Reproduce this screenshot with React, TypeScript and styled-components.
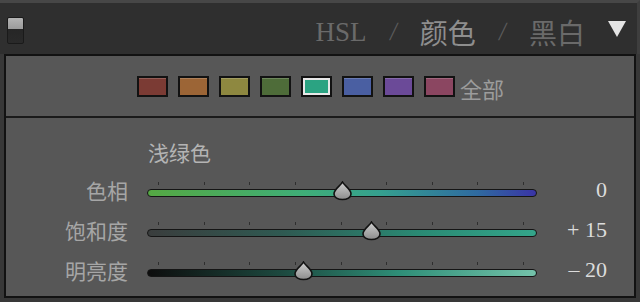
import * as React from 'react';
import styled, { createGlobalStyle } from 'styled-components';

const GlobalStyle = createGlobalStyle`
    html, body {
        margin: 0;
        padding: 0;
        background-color: #383838;
    }
    * {
        box-sizing: border-box;
    }
`

const cjk = `"Noto Sans CJK SC", "Noto Sans", sans-serif`
const serif = `"Liberation Serif", "Noto Sans CJK SC", serif`

type Swatch = { color: string, active?: boolean }

const swatches: Swatch[] = [
    { color: '#7b3b34' },
    { color: '#9c6536' },
    { color: '#8e8840' },
    { color: '#4e6c39' },
    { color: '#2ba382', active: true },
    { color: '#4a5fa2' },
    { color: '#6b4a98' },
    { color: '#8b4661' },
]

type SliderData = {
    label: string
    value: number
    text: string
    track: string
}

const sliders: SliderData[] = [
    { label: '色相', value: 0, text: '0', track: 'linear-gradient(90deg, #55a843 0%, #3fae78 40%, #35a08f 60%, #2f6aa0 85%, #3a34a6 100%)' },
    { label: '饱和度', value: 15, text: '+ 15', track: 'linear-gradient(90deg, #3a3d3d 0%, #2f5a52 35%, #2a8a74 70%, #34a58a 100%)' },
    { label: '明亮度', value: -20, text: '– 20', track: 'linear-gradient(90deg, #0d0d0d 0%, #1d4a40 35%, #2f8f78 65%, #74c2aa 100%)' },
]

const Page = styled.div`
    width: 640px;
    height: 302px;
    background-color: #383838;
    display: flex;
    flex-direction: column;
    overflow: hidden;
`

const Header = styled.div`
    height: 54px;
    background-color: #2f2f2f;
    border-top: 3px solid #474747;
    border-right: 3px solid #3e3e3e;
    display: flex;
    align-items: center;
    justify-content: space-between;
    padding: 0 11px 0 7px;
`

const Toggle = styled.div`
    width: 17px;
    height: 27px;
    margin-top: 4px;
    border: 1px solid #1a1a1a;
    border-radius: 2px;
    background: linear-gradient(180deg, #b4b4b4 0%, #9c9c9c 42%, #262626 44%, #2a2a2a 100%);
`

const Tabs = styled.div`
    display: flex;
    align-items: center;
    gap: 23px;
    margin-top: 7px;
`

const Tab = styled.span<{ $active?: boolean, $latin?: boolean }>`
    font-family: ${props => props.$latin ? serif : cjk};
    font-size: ${props => props.$latin ? '27px' : '28px'};
    line-height: 1;
    color: ${props => props.$active ? '#8e8e8e' : '#6a6a6a'};
`

const Slash = styled.span`
    font-family: ${serif};
    font-size: 26px;
    line-height: 1;
    color: #5c5c5c;
    transform: skewX(-8deg);
`

const Caret = styled.span`
    width: 0;
    height: 0;
    margin-top: -6px;
    border-left: 9px solid transparent;
    border-right: 9px solid transparent;
    border-top: 16px solid #e4e4e4;
`

const Panel = styled.div`
    margin: 0 4px 0 4px;
    height: 244px;
    border: 2px solid #121212;
    background-color: #575757;
    display: flex;
    flex-direction: column;
`

const SwatchRow = styled.div`
    height: 62px;
    flex-shrink: 0;
    border-bottom: 2px solid #1a1a1a;
    display: flex;
    align-items: center;
    padding-left: 131px;
    gap: 10px;
`

const SwatchBox = styled.div<{ $color: string, $active?: boolean }>`
    width: 31px;
    height: 21px;
    background-color: ${props => props.$color};
    border: 2px solid #121212;
    box-shadow: ${props => props.$active
        ? 'inset 0 0 0 2px #e8e8e8'
        : 'inset 0 1px 0 rgba(255,255,255,0.18)'};
`

const AllLabel = styled.span`
    font-family: ${cjk};
    font-size: 22px;
    line-height: 1;
    color: #9c9c9c;
    margin-left: -5px;
    margin-top: 4px;
`

const Body = styled.div`
    display: flex;
    flex-direction: column;
    padding-top: 21px;
`

const Title = styled.div`
    font-family: ${cjk};
    font-size: 21px;
    line-height: 26px;
    color: #b4b4b4;
    padding-left: 142px;
    margin-bottom: 5px;
`

const Row = styled.div`
    height: 40px;
    display: grid;
    grid-template-columns: 122px 390px 51px;
    column-gap: 19px;
    align-items: center;
`

const Label = styled.span`
    font-family: ${cjk};
    font-size: 21px;
    line-height: 1;
    color: #a6a6a6;
    text-align: right;
`

const TrackWrap = styled.div`
    position: relative;
    height: 22px;
    display: flex;
    flex-direction: column;
    justify-content: flex-end;
`

const Ticks = styled.div`
    display: flex;
    justify-content: space-between;
    padding: 0 13px 0 11px;
    margin-bottom: 4px;
`

const Tick = styled.span`
    width: 1px;
    height: 3px;
    background-color: #2e2e2e;
`

const Track = styled.div<{ $fill: string }>`
    height: 8px;
    margin-bottom: 4px;
    border: 1px solid #151515;
    border-radius: 4px;
    background: ${props => props.$fill};
`

const Thumb = styled.svg`
    position: absolute;
    top: 2px;
    width: 21px;
    height: 20px;
`

const Value = styled.span`
    font-family: ${serif};
    font-size: 22px;
    line-height: 1;
    color: #dcdcdc;
    text-align: right;
    white-space: nowrap;
`

const Slider = ({ data }: { data: SliderData }) => {
    const pct = (data.value + 100) / 200
    return (
        <Row>
            <Label>{data.label}</Label>
            <TrackWrap>
                <Ticks>
                    {Array.from({ length: 9 }).map((_, i) => <Tick key={i} />)}
                </Ticks>
                <Track $fill={data.track} />
                <Thumb viewBox="0 0 21 20" style={{ left: `calc(${pct * 100}% - 10px)` }}>
                    <defs>
                        <linearGradient id={`g-${data.label}`} x1="0" y1="0" x2="0" y2="1">
                            <stop offset="0" stopColor="#d0d0d0" />
                            <stop offset="1" stopColor="#8c8c8c" />
                        </linearGradient>
                    </defs>
                    <path
                        d="M10.5 1 C12.5 5 19 8 19 13 C19 16.5 15 18.5 10.5 18.5 C6 18.5 2 16.5 2 13 C2 8 8.5 5 10.5 1 Z"
                        fill={`url(#g-${data.label})`}
                        stroke="#121212"
                        strokeWidth="1.6"
                    />
                </Thumb>
            </TrackWrap>
            <Value>{data.text}</Value>
        </Row>
    )
}

export default function App() {
    return (
        <Page>
            <GlobalStyle />
            <Header>
                <Toggle />
                <Tabs>
                    <Tab $latin>HSL</Tab>
                    <Slash>/</Slash>
                    <Tab $active>颜色</Tab>
                    <Slash>/</Slash>
                    <Tab>黑白</Tab>
                    <Caret />
                </Tabs>
            </Header>
            <Panel>
                <SwatchRow>
                    {swatches.map(s => <SwatchBox key={s.color} $color={s.color} $active={s.active} />)}
                    <AllLabel>全部</AllLabel>
                </SwatchRow>
                <Body>
                    <Title>浅绿色</Title>
                    {sliders.map(s => <Slider key={s.label} data={s} />)}
                </Body>
            </Panel>
        </Page>
    )
}
